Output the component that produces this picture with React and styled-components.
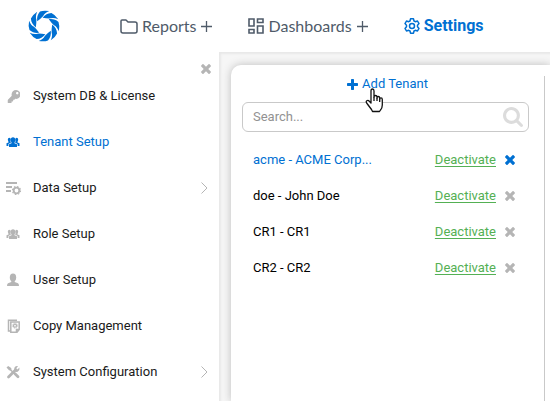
import React from "react";
import styled, { createGlobalStyle } from "styled-components";
import { FaKey } from "react-icons/fa";

const BLUE = "#0070d2";

const GlobalStyle = createGlobalStyle`
  *, *::before, *::after { box-sizing: border-box; }
  body {
    margin: 0;
    background: #fff;
    color: #1a1a1a;
    font: 13px/20px "Roboto", "Liberation Sans", sans-serif;
    overflow: hidden;
  }
  svg { display: block; flex: none; }
  button, input { font: inherit; }
`;

const Page = styled.div`
  display: flex;
  flex-direction: column;
  min-height: 100vh;
`;

const Header = styled.header`
  display: flex;
  align-items: center;
  height: 52px;
  padding-left: 28px;
`;

const LogoLink = styled.a`
  display: flex;
  margin-right: 60px;
`;

const MainNav = styled.nav`
  display: flex;
  gap: 35px;
`;

const NavLink = styled.a`
  display: flex;
  align-items: center;
  gap: 4px;
  color: ${(p) => (p.$active ? BLUE : "#4f5b69")};
  font-family: ${(p) => (p.$active ? '"Roboto"' : '"Lato"')}, sans-serif;
  font-size: 16px;
  font-weight: ${(p) => (p.$active ? 700 : 400)};
  line-height: 24px;
  text-decoration: none;
`;

const Body = styled.div`
  display: flex;
  flex: 1;
`;

const Sidebar = styled.aside`
  display: flex;
  flex-direction: column;
  width: 219px;
  padding-top: 1px;
`;

const IconButton = styled.button`
  display: flex;
  padding: 0;
  border: 0;
  background: none;
  color: ${(p) => (p.$active ? BLUE : "#b5b5b5")};
  cursor: pointer;
`;

const CloseRow = styled.div`
  display: flex;
  justify-content: flex-end;
  height: 20px;
  padding: 11px 8px 0 0;
`;

const SideLink = styled.a`
  display: flex;
  align-items: center;
  gap: 13px;
  height: 46px;
  padding: 0 11px 0 6px;
  color: ${(p) => (p.$active ? BLUE : "#1a1a1a")};
  text-decoration: none;

  svg { color: ${(p) => (p.$active ? BLUE : "#b5b5b5")}; }
`;

const SideLabel = styled.span`
  flex: 1;
`;

const Content = styled.main`
  display: flex;
  flex: 1;
  min-width: 0;
  padding: 13px 0 0 12px;
  background: #f6f6f6;
  box-shadow: inset 2px 2px 2px #e8e8e8;
  overflow: hidden;
`;

const Card = styled.section`
  flex: 1;
  min-width: 0;
  padding: 11px 5px 0 0;
  border-top-left-radius: 10px;
  background: #fff;
  box-shadow: 0 0 8px #bdbdbd;
`;

const TenantPanel = styled.div`
  min-height: 100%;
  padding: 0 15px 0 11px;
  border-right: 1px solid #c9c9c9;
`;

const AddRow = styled.div`
  position: relative;
  display: flex;
  justify-content: center;
  height: 26px;
  padding-left: 4px;
`;

const AddButton = styled.button`
  display: flex;
  align-items: center;
  gap: 4px;
  height: 16px;
  padding: 0;
  border: 0;
  background: none;
  color: ${BLUE};
  cursor: pointer;
`;

const Pointer = styled.svg`
  position: absolute;
  top: 12px;
  left: calc(50% - 21px);
  z-index: 1;
`;

const SearchBox = styled.label`
  display: flex;
  align-items: center;
  height: 30px;
  padding: 0 5px 0 10px;
  border: 1px solid #c9c9c9;
  border-radius: 6px;
  color: #dcdcdc;
`;

const SearchInput = styled.input`
  flex: 1;
  min-width: 0;
  padding: 0;
  border: 0;
  outline: 0;
  background: none;
  color: #1a1a1a;

  &::placeholder { color: #929292; opacity: 1; }
`;

const TenantList = styled.ul`
  margin: 10px 0 0;
  padding: 0 14px 0 11px;
  list-style: none;
`;

const TenantRow = styled.li`
  display: flex;
  align-items: center;
  height: 36px;
`;

const TenantName = styled.a`
  flex: 1;
  color: ${(p) => (p.$active ? BLUE : "#000")};
  text-decoration: none;
`;

const Deactivate = styled.a`
  margin-right: 9px;
  color: #54b054;
  text-decoration: underline;
  text-underline-offset: 2px;
`;

const Logo = () => (
  <svg width="32" height="32" viewBox="-16 -16 32 32" fill={BLUE} aria-hidden="true">
    {[0, 45, 90, 135, 180, 225, 270, 315].map((a) => (
      <path key={a} transform={`rotate(${a})`} d="M-6.800 -4.800C-7.200 -9 -6.500 -11.500 -4 -14.500Q0 -16 5.300 -14.900Q.5 -13 -.8 -10Q-3 -7.500 -6.800 -4.800Z" />
    ))}
  </svg>
);

const Folder = () => (
  <svg width="18" height="15" viewBox="0 0 18 15" fill="none" stroke="currentColor" strokeWidth="1.5" strokeLinejoin="round" aria-hidden="true">
    <path d="M1 2Q1 1 2 1H6L8 3H15Q17 3 17 5V12Q17 14 15 14H3Q1 14 1 12Z" />
  </svg>
);

const Grid = () => (
  <svg width="16" height="16" viewBox="0 0 16 16" fill="none" stroke="currentColor" strokeWidth="1.6" aria-hidden="true">
    <path d="M1 1H6V8H1ZM9.500 1H15V4.500H9.500ZM1 11.500H6V15H1ZM9.500 8H15V15H9.500Z" />
  </svg>
);

const Gear = () => (
  <svg width="16" height="16" viewBox="0 0 16 16" fill="none" stroke="currentColor" strokeWidth="1.500" strokeLinejoin="round" aria-hidden="true">
    <path d="M6.500 .8H9.500L10 3L11.300 3.700L13.500 3L15 5.600L13.500 7.200V8.800L15 10.400L13.500 13L11.300 12.300L10 13L9.500 15.200H6.500L6 13L4.700 12.300L2.500 13L1 10.400L2.500 8.800V7.200L1 5.600L2.500 3L4.700 3.700L6 3Z" />
    <circle cx="8" cy="8" r="2.500" />
  </svg>
);

const ThinPlus = () => (
  <svg width="13" height="13" viewBox="0 0 13 13" stroke="currentColor" strokeWidth="1.300" aria-hidden="true">
    <path d="M6.500 1V12M1 6.500H12" />
  </svg>
);

const Cross = () => (
  <svg width="10" height="10" viewBox="300 364 1192 1192" fill="currentColor" aria-hidden="true">
    <path d="M1490 1322q0 40-28 68l-136 136q-28 28-68 28t-68-28l-294-294-294 294q-28 28-68 28t-68-28l-136-136q-28-28-28-68t28-68l294-294-294-294q-28-28-28-68t28-68l136-136q28-28 68-28t68 28l294 294 294-294q28-28 68-28t68 28l136 136q28 28 28 68t-28 68l-294 294 294 294q28 28 28 68z" />
  </svg>
);

const Plus = () => (
  <svg width="11" height="11" viewBox="192 128 1408 1408" fill="currentColor" aria-hidden="true">
    <path d="M1600 736v192q0 40-28 68t-68 28h-416v416q0 40-28 68t-68 28h-192q-40 0-68-28t-28-68v-416h-416q-40 0-68-28t-28-68v-192q0-40 28-68t68-28h416v-416q0-40 28-68t68-28h192q40 0 68 28t28 68v416h416q40 0 68 28t28 68z" />
  </svg>
);

const Magnifier = () => (
  <svg width="20" height="20" viewBox="64 128 1664 1664" fill="currentColor" aria-hidden="true">
    <path d="M1216 832q0-185-131.5-316.5t-316.5-131.5-316.5 131.5-131.5 316.5 131.5 316.5 316.5 131.5 316.5-131.5 131.5-316.5zm512 832q0 52-38 90t-90 38q-54 0-90-38l-343-342q-179 124-399 124-143 0-273.5-55.5t-225-150-150-225-55.5-273.5 55.5-273.5 150-225 225-150 273.5-55.5 273.5 55.5 225 150 150 225 55.5 273.5q0 220-124 399l343 343q37 37 37 90z" />
  </svg>
);

const Chevron = () => (
  <svg width="7" height="12" viewBox="0 0 7 12" fill="none" stroke="currentColor" aria-hidden="true">
    <path d="M.5 .5L6 6L.5 11.500" />
  </svg>
);

const KeyIcon = () => (
  <svg width="14" height="14" viewBox="0 0 14 14" aria-hidden="true">
    <FaKey x="1.500" y="1" width="11.500" height="11.500" />
  </svg>
);

const People = () => (
  <svg width="14" height="14" viewBox="0 0 14 14" fill="currentColor" aria-hidden="true">
    <ellipse cx="7" cy="5" rx="2.300" ry="2.800" />
    <ellipse cx="3.300" cy="4.800" rx="1.500" ry="2" />
    <ellipse cx="10.700" cy="4.800" rx="1.500" ry="2" />
    <path d="M5.500 7H8.500V8.200L11 9.300V12H3V9.300L5.500 8.200ZM2.500 6H4.200L5 7.600L2.400 9V11H.5V8.300L2.500 7.500ZM11.500 6H9.800L9 7.600L11.600 9V11H13.500V8.300L11.500 7.500Z" />
  </svg>
);

const Person = () => (
  <svg width="14" height="14" viewBox="0 0 14 14" fill="currentColor" aria-hidden="true">
    <ellipse cx="7" cy="4.500" rx="3.200" ry="4" />
    <path d="M5.300 7H8.700V9L12 10.200Q13 10.700 13 13H1Q1 10.700 2 10.200L5.300 9Z" />
  </svg>
);

const DataGear = () => (
  <svg width="14" height="14" viewBox="0 0 14 14" fill="none" stroke="currentColor" overflow="visible" aria-hidden="true">
    <path strokeWidth="2" d="M0 2H11M0 6H6M0 10H5" />
    <circle cx="10.500" cy="9.500" r="2.800" strokeWidth="1.800" />
    <circle cx="10.500" cy="9.500" r="4" strokeWidth="1.200" strokeDasharray="1.57 1.57" />
  </svg>
);

const CopyGear = () => (
  <svg width="14" height="14" viewBox="0 0 14 14" fill="none" stroke="currentColor" aria-hidden="true">
    <path strokeWidth="1.500" d="M11 1.200H2.500V12H4.500M4.800 3H13.200V10.500L11 13.200H4.800ZM10.500 13V10.500H13" />
    <circle cx="9" cy="6.700" r="1.500" strokeWidth="1.300" />
    <circle cx="9" cy="6.700" r="2.500" strokeWidth=".8" strokeDasharray="1 1" />
  </svg>
);

const Tools = () => (
  <svg width="14" height="14" viewBox="0 0 14 14" fill="none" stroke="currentColor" aria-hidden="true">
    <path strokeWidth="2.800" strokeLinecap="round" d="M2.500 12L9.500 5M9 8.800L12 11.800" />
    <path strokeWidth="1.500" d="M3.500 4L8.500 8.500" />
    <path fill="currentColor" stroke="none" d="M.5 2.500L2.200 1L5.200 3L5.500 4.500L4.500 5.500L3 5.200ZM8.500 2.500Q10 .7 12 1.200L10.300 3.200L11.400 4.400L13.500 2.600Q14 5.500 11.700 6.800Q10 7.200 9 6.500L8 5Z" />
  </svg>
);

const Hand = () => (
  <Pointer width="19" height="25" viewBox="0 0 19 25" fill="#fff" stroke="#111" strokeWidth="1.300" strokeLinejoin="round" aria-hidden="true">
    <path d="M6 13V3Q6 1 7.500 1T9 3V9Q9 7.500 10.500 7.500T12 9V10Q12 8.500 13.300 8.500T14.700 10V11Q14.700 9.800 16 9.800T17.300 11.500V17Q17.300 20 15.500 22L14.500 23.500H7.500L6.500 21.500L2 15.500Q.5 13.500 1.800 12.700T4.300 13.200L6 15Z" />
    <path fill="none" d="M9 9V13M12 10V13M14.700 11V14" />
  </Pointer>
);

const sections = [
  { label: "System DB & License", Icon: KeyIcon },
  { label: "Tenant Setup", Icon: People, active: true },
  { label: "Data Setup", Icon: DataGear, nested: true },
  { label: "Role Setup", Icon: People },
  { label: "User Setup", Icon: Person },
  { label: "Copy Management", Icon: CopyGear },
  { label: "System Configuration", Icon: Tools, nested: true },
];

const tenants = ["acme - ACME Corp...", "doe - John Doe", "CR1 - CR1", "CR2 - CR2"];

export default function App() {
  return (
    <Page>
      <GlobalStyle />
      <Header>
        <LogoLink href="#home" aria-label="Home"><Logo /></LogoLink>
        <MainNav aria-label="Main">
          <NavLink href="#reports"><Folder />Reports<ThinPlus /></NavLink>
          <NavLink href="#dashboards"><Grid />Dashboards<ThinPlus /></NavLink>
          <NavLink href="#settings" $active><Gear />Settings</NavLink>
        </MainNav>
      </Header>
      <Body>
        <Sidebar>
          <CloseRow><IconButton aria-label="Close menu"><Cross /></IconButton></CloseRow>
          <nav aria-label="Settings">
            {sections.map(({ label, Icon, active, nested }) => (
              <SideLink key={label} href="#section" $active={active}>
                <Icon />
                <SideLabel>{label}</SideLabel>
                {nested && <Chevron />}
              </SideLink>
            ))}
          </nav>
        </Sidebar>
        <Content>
          <Card>
            <TenantPanel>
              <AddRow>
                <AddButton><Plus />Add Tenant</AddButton>
                <Hand />
              </AddRow>
              <SearchBox>
                <SearchInput type="text" placeholder="Search..." aria-label="Search tenants" />
                <Magnifier />
              </SearchBox>
              <TenantList>
                {tenants.map((name, i) => (
                  <TenantRow key={name}>
                    <TenantName href="#tenant" $active={i === 0}>{name}</TenantName>
                    <Deactivate href="#deactivate">Deactivate</Deactivate>
                    <IconButton $active={i === 0} aria-label={`Delete ${name}`}><Cross /></IconButton>
                  </TenantRow>
                ))}
              </TenantList>
            </TenantPanel>
          </Card>
        </Content>
      </Body>
    </Page>
  );
}
